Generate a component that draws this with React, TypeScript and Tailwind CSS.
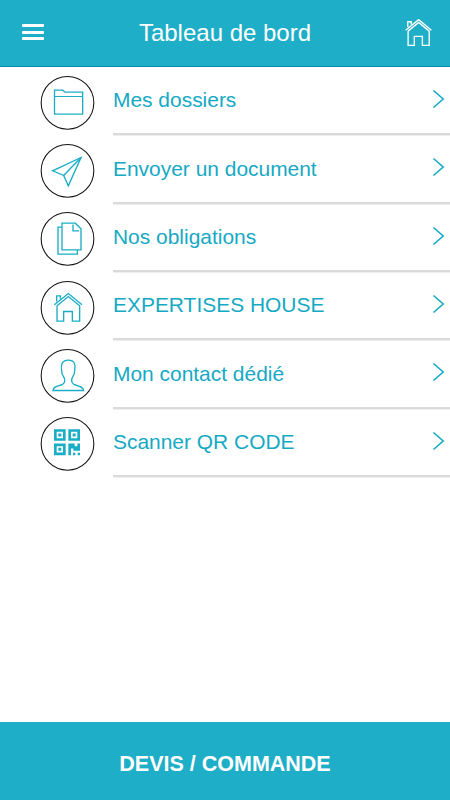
import type { ReactNode } from 'react';

const House = () => (
  <>
    <path d="M58 90 L100 56 L141 90 M66 93 V139 H86 V110 H112 V139 H134 V93 L100 65 L66 93" />
    <path d="M65 80 V63 H76 V72" />
  </>
);

const rows: { label: string; icon: ReactNode }[] = [
  {
    label: 'Mes dossiers',
    icon: (
      <>
        <path d="M58.5 133 V61 H83 L90 67 H143 V133 Z" />
        <path d="M58 80 H143" strokeWidth={3} />
      </>
    ),
  },
  {
    label: 'Envoyer un document',
    icon: (
      <>
        <path d="M138 59 L53 99 L86 113 L100 144 Z" />
        <path d="M86 113 L138 59" />
      </>
    ),
  },
  {
    label: 'Nos obligations',
    icon: (
      <>
        <path d="M81 52 H121 L138 69 V132 H81 Z M114 56 V75 H132" />
        <path d="M81 64 H69 V145 H127 V133" />
      </>
    ),
  },
  { label: 'EXPERTISES HOUSE', icon: <House /> },
  {
    label: 'Mon contact dédié',
    icon: (
      <path d="M54 143 C55 131 68 130 82 125 C93 119 90 109 85 100 C81 96 80 89 80 83 C76 66 82 52 100 52 C119 52 123 66 119 83 C119 89 118 96 114 100 C109 109 107 119 117 125 C132 130 144 131 146 143 Z" />
    ),
  },
  {
    label: 'Scanner QR CODE',
    icon: (
      <g fill="#19adc6" stroke="none">
        <path
          fillRule="evenodd"
          d="M57 55 H92 V90 H57 Z M65 63 V82 H84 V63 Z M100 55 H135 V90 H100 Z M108 63 V82 H127 V63 Z M57 98 H92 V133 H57 Z M65 106 V125 H84 V106 Z"
        />
        <path d="M70 68 h9 v9 h-9z M113 68 h9 v9 h-9z M70 111 h9 v9 h-9z M100 98 H119 V106 H127 V98 H135 V120 H115 V113 H108 V133 H100 Z M114 126 h7 v7 h-7z M128 126 h7 v7 h-7z" />
      </g>
    ),
  },
];

export default function App() {
  return (
    <div className="flex h-[800px] w-[450px] flex-col overflow-hidden bg-white font-['Liberation_Sans',Arial,sans-serif]">
      <header className="flex h-[67px] shrink-0 items-center justify-between border-b border-[#078eaf] bg-[#1faec7] pr-[18px] pl-[22px] text-white">
        <button className="flex w-[23px] flex-col gap-[3.5px] pb-[2px]" aria-label="Menu">
          <span className="h-[3px] w-[22px] rounded-[1px] bg-white" />
          <span className="h-[3px] w-[22px] rounded-[1px] bg-white" />
          <span className="h-[3px] w-[22px] rounded-[1px] bg-white" />
        </button>
        <h1 className="text-[24px] leading-[30px]">Tableau de bord</h1>
        <svg
          className="mt-[-2px] h-[27px] w-[27px]"
          viewBox="56 54 87 87"
          fill="none"
          stroke="currentColor"
          strokeWidth={4.4}
        >
          <House />
        </svg>
      </header>
      <main className="flex-1">
        {rows.map((row) => (
          <div key={row.label} className="flex h-[68.35px] pl-[40px]">
            <svg
              className="mt-[8.5px] h-[54px] w-[54px] shrink-0 overflow-visible"
              viewBox="15 18.5 162 162"
              fill="none"
              stroke="#19adc6"
              strokeWidth={4}
            >
              <circle cx="97.5" cy="99" r="79" stroke="#151515" strokeWidth={3.2} />
              {row.icon}
            </svg>
            <div className="ml-[19px] flex flex-1 justify-between border-b-2 border-[#dadada] pr-[5px] shadow-[0_1px_0_#eeeeee]">
              <span className="mt-[21.2px] text-[20.95px] leading-[24px] text-[#15a9c4]">{row.label}</span>
              <svg
                className="mt-[22px] h-[20px] w-[13px]"
                viewBox="0 0 13 20"
                fill="none"
                stroke="#15a9c4"
                strokeWidth={1.6}
              >
                <path d="M1.5 1.5 L11.2 10 L1.5 18.5" />
              </svg>
            </div>
          </div>
        ))}
      </main>
      <footer className="flex h-[78px] shrink-0 items-center justify-center bg-[#1faec7] pt-[6px] text-[21.5px] font-bold text-white">
        DEVIS / COMMANDE
      </footer>
    </div>
  );
}
